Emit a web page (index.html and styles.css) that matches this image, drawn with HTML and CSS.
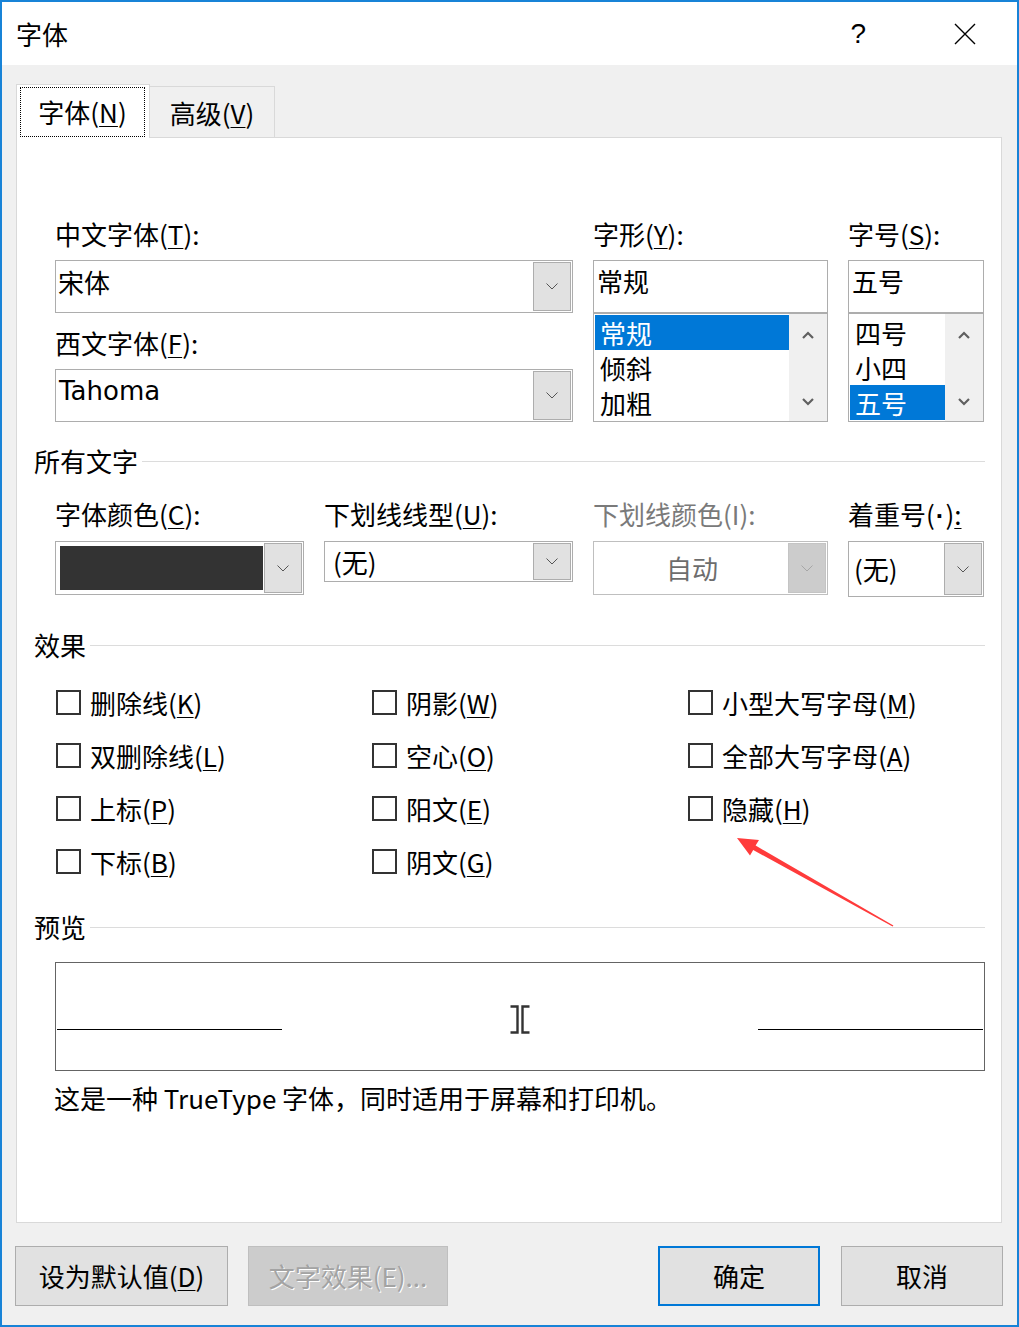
FILE: index.html
```html
<!DOCTYPE html>
<html lang="zh-CN">
<head>
    <meta charset="UTF-8" />
    <title>字体</title>
    <link rel="stylesheet" href="styles.css">
</head>
<body>

<div class="window">
    <div class="titlebar">
        <span class="title">字体</span>
        <span class="help">?</span>
        <svg class="close" width="22" height="22" viewBox="0 0 22 22"><path d="M1 1L21 21M21 1L1 21" stroke="#000" stroke-width="1.4" fill="none"/></svg>
    </div>

    <div class="client">
        <div class="tabs">
            <div class="tab active"><span class="tab-focus">字体(<u>N</u>)</span></div>
            <div class="tab">高级(<u>V</u>)</div>
        </div>

        <div class="panel">
            <!-- 字体 / 字形 / 字号 -->
            <div class="font-grid">
                <div class="col">
                    <div class="label">中文字体(<u>T</u>):</div>
                    <div class="combo">
                        <span class="value">宋体</span>
                        <span class="drop"><svg width="12" height="7" viewBox="0 0 12 7"><polyline points="0.5,0.5 6,6 11.5,0.5" fill="none" stroke="#555" stroke-width="1"/></svg></span>
                    </div>
                    <div class="label label-2">西文字体(<u>F</u>):</div>
                    <div class="combo">
                        <span class="value latin">Tahoma</span>
                        <span class="drop"><svg width="12" height="7" viewBox="0 0 12 7"><polyline points="0.5,0.5 6,6 11.5,0.5" fill="none" stroke="#555" stroke-width="1"/></svg></span>
                    </div>
                </div>

                <div class="col">
                    <div class="label">字形(<u>Y</u>):</div>
                    <div class="textbox">常规</div>
                    <div class="listbox">
                        <div class="items">
                            <div class="item selected">常规</div>
                            <div class="item">倾斜</div>
                            <div class="item">加粗</div>
                        </div>
                        <div class="scrollbar">
                            <svg width="12" height="8" viewBox="0 0 12 8"><polyline points="1,7 6,2 11,7" fill="none" stroke="#606060" stroke-width="2.2"/></svg>
                            <svg width="12" height="8" viewBox="0 0 12 8"><polyline points="1,1 6,6 11,1" fill="none" stroke="#606060" stroke-width="2.2"/></svg>
                        </div>
                    </div>
                </div>

                <div class="col">
                    <div class="label">字号(<u>S</u>):</div>
                    <div class="textbox">五号</div>
                    <div class="listbox">
                        <div class="items">
                            <div class="item">四号</div>
                            <div class="item">小四</div>
                            <div class="item selected">五号</div>
                        </div>
                        <div class="scrollbar">
                            <svg width="12" height="8" viewBox="0 0 12 8"><polyline points="1,7 6,2 11,7" fill="none" stroke="#606060" stroke-width="2.2"/></svg>
                            <svg width="12" height="8" viewBox="0 0 12 8"><polyline points="1,1 6,6 11,1" fill="none" stroke="#606060" stroke-width="2.2"/></svg>
                        </div>
                    </div>
                </div>
            </div>

            <!-- 所有文字 -->
            <div class="section">所有文字</div>
            <div class="style-grid">
                <div class="col">
                    <div class="label">字体颜色(<u>C</u>):</div>
                    <div class="combo combo-color">
                        <span class="swatch"></span>
                        <span class="drop"><svg width="12" height="7" viewBox="0 0 12 7"><polyline points="0.5,0.5 6,6 11.5,0.5" fill="none" stroke="#555" stroke-width="1"/></svg></span>
                    </div>
                </div>
                <div class="col">
                    <div class="label">下划线线型(<u>U</u>):</div>
                    <div class="combo combo-short">
                        <span class="value centered pad-wide">(无)</span>
                        <span class="drop"><svg width="12" height="7" viewBox="0 0 12 7"><polyline points="0.5,0.5 6,6 11.5,0.5" fill="none" stroke="#555" stroke-width="1"/></svg></span>
                    </div>
                </div>
                <div class="col">
                    <div class="label disabled-text">下划线颜色(I):</div>
                    <div class="combo combo-disabled">
                        <span class="value centered auto">自动</span>
                        <span class="drop"><svg width="12" height="7" viewBox="0 0 12 7"><polyline points="0.5,0.5 6,6 11.5,0.5" fill="none" stroke="#a6a6a6" stroke-width="1"/></svg></span>
                    </div>
                </div>
                <div class="col">
                    <div class="label">着重号(<span class="dot">·</span>)<u>:</u></div>
                    <div class="combo combo-tall">
                        <span class="value centered pad-small">(无)</span>
                        <span class="drop"><svg width="12" height="7" viewBox="0 0 12 7"><polyline points="0.5,0.5 6,6 11.5,0.5" fill="none" stroke="#555" stroke-width="1"/></svg></span>
                    </div>
                </div>
            </div>

            <!-- 效果 -->
            <div class="section section-effects">效果</div>
            <div class="effects">
                <div class="check"><span class="box"></span><span>删除线(<u>K</u>)</span></div>
                <div class="check"><span class="box"></span><span>阴影(<u>W</u>)</span></div>
                <div class="check"><span class="box"></span><span>小型大写字母(<u>M</u>)</span></div>
                <div class="check"><span class="box"></span><span>双删除线(<u>L</u>)</span></div>
                <div class="check"><span class="box"></span><span>空心(<u>O</u>)</span></div>
                <div class="check"><span class="box"></span><span>全部大写字母(<u>A</u>)</span></div>
                <div class="check"><span class="box"></span><span>上标(<u>P</u>)</span></div>
                <div class="check"><span class="box"></span><span>阳文(<u>E</u>)</span></div>
                <div class="check"><span class="box"></span><span>隐藏(<u>H</u>)</span></div>
                <div class="check"><span class="box"></span><span>下标(<u>B</u>)</span></div>
                <div class="check"><span class="box"></span><span>阴文(<u>G</u>)</span></div>
            </div>

            <!-- 预览 -->
            <div class="section">预览</div>
            <div class="preview">
                <span class="preview-line"></span>
                <svg class="cursor" width="20" height="29" viewBox="0 0 20 29"><path d="M0.5 1.5H7.5V27.5H0.5M19.5 1.5H12.5V27.5H19.5" fill="none" stroke="#333" stroke-width="2.4"/></svg>
                <span class="preview-line"></span>
            </div>
            <div class="desc">这是一种 TrueType 字体，同时适用于屏幕和打印机。</div>
        </div>

        <div class="buttons">
            <div class="btn btn-default">设为默认值(<u>D</u>)</div>
            <div class="btn btn-effects disabled">文字效果(E)...</div>
            <div class="btn btn-ok">确定</div>
            <div class="btn btn-cancel">取消</div>
        </div>
    </div>

    <svg class="annotation" width="1019" height="1327" viewBox="0 0 1019 1327">
        <polygon points="737,838 759,840 755.6,845.6 893.4,925.4 892.6,926.6 753.2,850 750,855.6" fill="#ff3b3b"/>
    </svg>
</div>

</body>
</html>
```

FILE: styles.css
```css
* {
    box-sizing: border-box;
}

body {
    margin: 0;
    font-family: "Noto Sans CJK SC", "Noto Sans", sans-serif;
    font-size: 26px;
    color: #000;
    background: #fff;
}

u {
    text-decoration-thickness: 1px;
    text-underline-offset: 3px;
}

.window {
    position: relative;
    width: 1019px;
    height: 1327px;
    border: 2px solid #1883d7;
    background: #f0f0f0;
}

/* title bar */
.titlebar {
    height: 63px;
    background: #fff;
    display: flex;
    align-items: center;
    padding-left: 14px;
    line-height: 34px;
}

.help {
    margin-left: auto;
    font-family: "Liberation Sans", sans-serif;
    font-size: 28px;
}

.close {
    margin-left: 88px;
    margin-right: 41px;
}

/* client area */
.client {
    padding: 19px 15px 0 14px;
}

.tabs {
    display: flex;
    align-items: flex-end;
    margin-bottom: -1px;
}

.tab {
    width: 125px;
    height: 52px;
    border: 1px solid #d9d9d9;
    border-left: none;
    border-bottom: none;
    display: flex;
    align-items: center;
    justify-content: center;
    line-height: 34px;
}

.tab.active {
    position: relative;
    width: 134px;
    height: 54px;
    border-left: 1px solid #d9d9d9;
    background: #fff;
    padding: 2px 4px 1px 3px;
}

.tab-focus {
    width: 100%;
    height: 100%;
    border: 1px dotted #000;
    display: flex;
    align-items: center;
    justify-content: center;
}

.panel {
    height: 1086px;
    background: #fff;
    border: 1px solid #d9d9d9;
    padding: 79px 16px 0 17px;
}

.label {
    height: 34px;
    line-height: 34px;
    white-space: nowrap;
}

.label-2 {
    margin-top: 13px;
}

.disabled-text {
    color: #7a7a7a;
}

.dot {
    font-family: "Liberation Sans", sans-serif;
    font-weight: bold;
    padding: 0 1px;
}

/* combos and lists */
.font-grid {
    display: grid;
    grid-template-columns: 518px 235px 136px;
    column-gap: 20px;
    margin-left: 21px;
}

.combo {
    margin-top: 9px;
    height: 53px;
    border: 1px solid #adadad;
    background: #fff;
    padding: 1px;
    display: flex;
}

.value {
    flex: 1;
    padding: 3px 0 0 1px;
    line-height: 34px;
    white-space: nowrap;
}

.value.latin {
    font-family: "DejaVu Sans", sans-serif;
    padding-left: 2px;
}

.value.centered {
    padding-top: 0;
    align-self: center;
}

.value.pad-wide {
    padding-left: 7px;
}

.value.pad-small {
    padding-left: 4px;
}

.value.auto {
    text-align: center;
    color: #6d6d6d;
}

.drop {
    width: 38px;
    background: #e1e1e1;
    border: 1px solid #adadad;
    display: flex;
    align-items: center;
    justify-content: center;
}

.textbox {
    margin-top: 9px;
    height: 53px;
    border: 1px solid #adadad;
    padding: 3px 0 0 3px;
    line-height: 34px;
}

.listbox {
    height: 109px;
    border: 1px solid #adadad;
    display: flex;
}

.items {
    flex: 1;
    padding: 1px 0 0 1px;
}

.item {
    height: 35px;
    line-height: 35px;
    padding-left: 5px;
}

.item.selected {
    background: #0078d7;
    color: #fff;
}

.scrollbar {
    width: 38px;
    background: #f0f0f0;
    display: flex;
    flex-direction: column;
    align-items: center;
    justify-content: space-between;
    padding: 17px 0 15px;
}

/* section headings */
.section {
    display: flex;
    align-items: center;
    height: 34px;
    line-height: 34px;
    margin-top: 22px;
}

.section::after {
    content: "";
    flex: 1;
    height: 1px;
    background: #dcdcdc;
    margin-left: 4px;
}

.section-effects {
    margin-top: 31px;
}

.style-grid {
    display: grid;
    grid-template-columns: 249px 249px 235px 136px;
    column-gap: 20px;
    align-items: start;
    margin: 19px 0 0 21px;
}

.style-grid .combo {
    margin-top: 10px;
}

.combo-color {
    height: 54px;
}

.swatch {
    flex: 1;
    background: #333;
    margin: 3px 1px 3px 3px;
}

.combo-short {
    height: 41px;
}

.combo-disabled {
    height: 54px;
    border-color: #bfbfbf;
}

.combo-disabled .drop {
    background: #cccccc;
    border-color: #c4c4c4;
}

.combo-tall {
    height: 56px;
}

/* effects */
.effects {
    display: grid;
    grid-template-columns: repeat(3, 316px);
    margin: 14px 0 0 22px;
}

.check {
    height: 53px;
    display: flex;
    align-items: center;
    gap: 9px;
    white-space: nowrap;
}

.box {
    width: 25px;
    height: 25px;
    border: 2px solid #333;
    background: #fff;
}

/* preview */
.preview {
    margin: 18px 0 0 21px;
    height: 109px;
    border: 1px solid #646464;
    padding: 0 1px;
    display: grid;
    grid-template-columns: 225px 1fr 225px;
    align-items: start;
}

.preview-line {
    margin-top: 66px;
    height: 1px;
    background: #000;
}

.cursor {
    justify-self: center;
    margin-top: 42px;
}

.desc {
    margin: 10px 0 0 20px;
    line-height: 34px;
}

/* buttons */
.buttons {
    display: flex;
    gap: 20px;
    margin: 23px -1px 0 -1px;
}

.btn {
    height: 60px;
    border: 1px solid #adadad;
    background: #e1e1e1;
    display: flex;
    align-items: center;
    justify-content: center;
    line-height: 34px;
}

.btn-default {
    width: 213px;
}

.btn-effects {
    width: 200px;
}

.btn-ok {
    width: 162px;
    margin-left: auto;
    border: 2px solid #0078d7;
}

.btn-cancel {
    width: 162px;
    margin-left: 1px;
}

.btn.disabled {
    background: #cccccc;
    border-color: #bfbfbf;
    color: #a3a3a3;
    text-shadow: 1px 1px 0 #fff;
}

.annotation {
    position: absolute;
    left: -2px;
    top: -2px;
    pointer-events: none;
}
```
